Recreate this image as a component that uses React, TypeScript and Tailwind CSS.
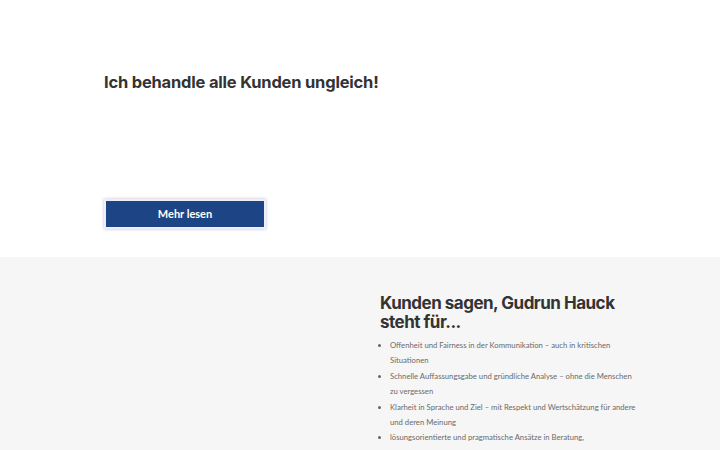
import React from 'react';

const points = [
  'Offenheit und Fairness in der Kommunikation – auch in kritischen Situationen',
  'Schnelle Auffassungsgabe und gründliche Analyse – ohne die Menschen zu vergessen',
  'Klarheit in Sprache und Ziel – mit Respekt und Wertschätzung für andere und deren Meinung',
  'lösungsorientierte und pragmatische Ansätze in Beratung, Konzeptentwicklung und Coaching',
];

export default function App() {
  return (
    <div className="h-[450px] w-[720px] overflow-hidden bg-white font-['Lato',sans-serif]">
      <section className="h-[257px] pl-[104px] pt-[72px]">
        <h2 className="font-['Inter',sans-serif] text-[16.5px] font-bold leading-[21px] tracking-[-0.2px] text-[#333]">
          Ich behandle alle Kunden ungleich!
        </h2>
        <button className="mt-[106px] h-[30px] w-[162px] border-2 border-[#eceef8] bg-[#1d4585] text-[11px] font-bold text-white shadow-[0_0_3px_rgba(120,110,170,0.45)]">
          Mehr lesen
        </button>
      </section>

      <section className="grid grid-cols-[276px_257px] bg-[#f6f6f6] pl-[104px] pt-[37px]">
        <div />
        <div>
          <h2 className="font-['Inter',sans-serif] text-[17px] font-bold leading-[19px] tracking-[-0.5px] text-[#333]">
            Kunden sagen, Gudrun Hauck steht für...
          </h2>
          <ul className="mt-[6px] list-disc pl-[10px] text-[7.7px] leading-[15.4px] text-[#6a6a6a] marker:text-[#666]">
            {points.map((p) => (
              <li key={p}>{p}</li>
            ))}
          </ul>
        </div>
      </section>
    </div>
  );
}
